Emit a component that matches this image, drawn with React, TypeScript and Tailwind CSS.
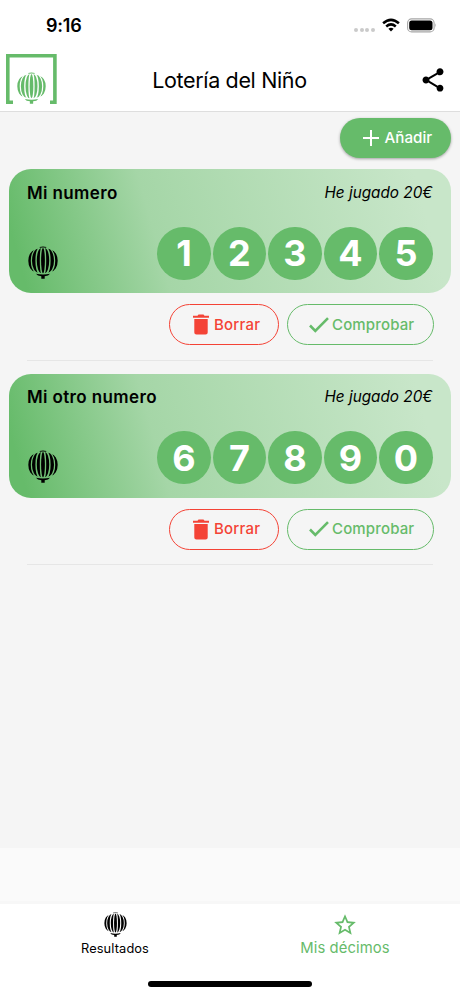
import React from "react";

function Balloon({ className }: { className?: string }) {
  return (
    <svg viewBox="0 0 30 33" className={className} fill="currentColor">
      <path d="M11.500 1.100Q15 -.1 18.500 1.100L18 1.800Q15 1 12 1.800Z" />
      <ellipse cx="15" cy="14.600" rx="1.900" ry="12.600" />
      <path d="M13 2.200A1.200 12.400 0 0 0 13 27A4.200 12.400 0 0 1 13 2.200Z" />
      <path d="M17 2.200A1.200 12.400 0 0 1 17 27A4.200 12.400 0 0 0 17 2.200Z" />
      <path d="M10.200 2.800A2.800 11.900 0 0 0 10.200 26.600A6.200 11.900 0 0 1 10.200 2.800Z" />
      <path d="M19.800 2.800A2.800 11.900 0 0 1 19.800 26.600A6.200 11.900 0 0 0 19.800 2.800Z" />
      <path d="M6.800 4.300A4 10.500 0 0 0 6.800 25.300A6.500 10.500 0 0 1 6.800 4.300Z" />
      <path d="M23.200 4.300A4 10.500 0 0 1 23.200 25.300A6.500 10.500 0 0 0 23.200 4.300Z" />
      <path d="M8 27.800Q15 29.400 22 27.800L20 29.600L16.700 30.300V32.800H13.300V30.300L10 29.600Z" />
    </svg>
  );
}

function StatusBar() {
  return (
    <div className="flex h-[50px] items-start justify-between pl-[46px] pr-[23px]">
      <span className="mt-[12px] text-[18px] leading-[27px] font-semibold tracking-[-0.2px]">9:16</span>
      <div className="mt-[17px] flex items-center">
        <div className="mr-[7px] mt-[9px] flex gap-[1.600px]">
          {[0, 1, 2, 3].map((i) => (
            <span key={i} className="size-[4px] rounded-full bg-[#cacaca]" />
          ))}
        </div>
        <svg className="mr-[7px] h-[14px] w-[18px]" viewBox="0 0 18 14" fill="none" stroke="black" strokeWidth="2.500">
          <path d="M1.100 5.300Q9-1.600 16.900 5.300" />
          <path d="M4.200 8.500Q9 4.300 13.800 8.500" />
          <path d="M6.400 10.800Q9 8.700 11.600 10.800L9 13.500Z" fill="black" stroke="none" />
        </svg>
        <svg className="mt-[1px] h-[15px] w-[30px]" viewBox="0 0 30 15">
          <rect x=".6" y=".9" width="26.500" height="13" rx="4" fill="none" stroke="#a6a6a6" strokeWidth="1.100" />
          <rect x="2.200" y="2.500" width="23.300" height="9.800" rx="2.500" />
          <path d="M28.400 5.300Q30 7.400 28.400 9.500Z" fill="#a6a6a6" />
        </svg>
      </div>
    </div>
  );
}

function Header() {
  return (
    <header className="flex h-[61px] items-start justify-between pl-[6px] pr-[13px]">
      <div className="mt-[4px] h-[50px] w-[51px] text-[#66bb6a]">
        <svg viewBox="0 0 51 50" className="h-full w-full">
          <path d="M7 48.200H1.800V1.800H48.900V48.200H44" fill="none" stroke="currentColor" strokeWidth="3.600" />
          <svg x="11" y="18" width="29" height="32" viewBox="0 0 29 32">
            <Balloon />
          </svg>
        </svg>
      </div>
      <h1 className="mt-[14px] ml-[6px] w-[170px] whitespace-nowrap text-center text-[21.500px] leading-[32px] tracking-[-0.350px]">Lotería del Niño</h1>
      <svg className="mt-[16px] ml-[23px] size-[28px]" viewBox="0 0 24 24">
        <path d="M18 16.080c-.76 0-1.440.3-1.960.77L8.910 12.700c.05-.23.090-.46.090-.7s-.04-.47-.09-.7l7.050-4.110c.54.5 1.250.81 2.040.81 1.660 0 3-1.340 3-3s-1.340-3-3-3-3 1.340-3 3c0 .24.040.47.090.7L8.040 9.810C7.500 9.310 6.790 9 6 9c-1.660 0-3 1.340-3 3s1.340 3 3 3c.79 0 1.500-.31 2.040-.81l7.120 4.160c-.05.21-.08.43-.08.65 0 1.610 1.310 2.920 2.920 2.920s2.920-1.310 2.920-2.920-1.310-2.920-2.920-2.920z" />
      </svg>
    </header>
  );
}

function Ticket({ name, digits }: { name: string; digits: string }) {
  return (
    <section className="h-[204.300px] px-[9px]">
      <div className="h-[124px] rounded-[22px] bg-[linear-gradient(74.300deg,#66bb6a_4%,#a5d6a7_34%,#c8e6c9_92%)] pr-[18.500px] pl-[18px] pt-[10px]">
        <div className="flex h-[28px] items-center justify-between">
          <span className="text-[17px] font-semibold tracking-[0.370px]">{name}</span>
          <span className="text-[15.300px] italic">He jugado 20€</span>
        </div>
        <div className="mt-[19.500px] flex items-start justify-between">
          <Balloon className="mt-[19px] ml-[1px] h-[33px] w-[30px]" />
          <div className="flex gap-[2.300px]">
            {digits.split("").map((d) => (
              <span key={d} className="flex size-[53.200px] items-center justify-center rounded-full bg-[#66bb6a] text-[36px] font-bold text-white">{d}</span>
            ))}
          </div>
        </div>
      </div>
      <div className="mx-[18px] flex h-[67.500px] items-start justify-end gap-[8px] border-b border-[#e6e6e6] pt-[11px]">
        <button className="flex h-[41px] w-[110px] items-center rounded-full border-[1.300px] border-[#f44336] pl-[23px] text-[15px] font-medium tracking-[0.200px] text-[#f44336]">
          <svg className="mr-[5px] h-[21px] w-[16px]" viewBox="0 0 16 21" fill="currentColor">
            <path d="M1.300 5H14.700V18.500Q14.700 20.600 12.600 20.600H3.400Q1.300 20.600 1.300 18.500ZM0 1.700H4.500L5.500.5H10.500L11.500 1.700H16V3.700H0Z" />
          </svg>
          Borrar
        </button>
        <button className="mr-[-1px] flex h-[41px] w-[147px] items-center rounded-full border-[1.300px] border-[#66bb6a] pl-[21px] text-[15px] font-medium tracking-[0.150px] text-[#66bb6a]">
          <svg className="mr-[3px] h-[16px] w-[20px]" viewBox="0 0 20 16" fill="none" stroke="currentColor" strokeWidth="2.600">
            <path d="M1 8.500L6.300 13.800L19 1.100" />
          </svg>
          Comprobar
        </button>
      </div>
    </section>
  );
}

export default function App() {
  return (
    <div className="flex h-[996px] w-[460px] flex-col overflow-hidden bg-white font-['Inter','Liberation_Sans',sans-serif] text-black">
      <StatusBar />
      <Header />
      <main className="h-[737px] border-t border-[#dedede] bg-[#f5f5f5]">
        <div className="flex h-[57.300px] justify-end pt-[6px] pr-[9px]">
          <button className="flex h-[40px] w-[111px] items-center rounded-full bg-[#66bb6a] pl-[23px] text-[15.200px] font-medium tracking-[0px] text-white shadow-[0_1px_3px_rgba(0,0,0,0.350)]">
            <svg className="mr-[5.500px] size-[16px]" viewBox="0 0 16 16" stroke="currentColor" strokeWidth="2">
              <path d="M8 0V16M0 8H16" />
            </svg>
            Añadir
          </button>
        </div>
        <Ticket name="Mi numero" digits="12345" />
        <Ticket name="Mi otro numero" digits="67890" />
      </main>
      <div className="h-[56px] border-b-[3px] border-[#f7f7f7] bg-[#fafafa]" />
      <nav className="grid h-[77px] grid-cols-2 bg-white">
        <div className="flex flex-col items-center pt-[8px]">
          <Balloon className="h-[25px] w-[23px]" />
          <span className="mt-[2px] text-[12.800px] leading-[20px] tracking-[0.120px]">Resultados</span>
        </div>
        <div className="flex flex-col items-center pt-[8px] text-[#66bb6a]">
          <svg className="size-[26px]" viewBox="0 0 24 24" fill="currentColor">
            <path d="M22 9.240l-7.190-.62L12 2 9.190 8.630 2 9.240l5.460 4.730L5.820 21 12 17.270 18.180 21l-1.630-7.030L22 9.240zM12 15.400l-3.760 2.270 1-4.280-3.320-2.880 4.380-.38L12 6.100l1.710 4.040 4.380.38-3.320 2.880 1 4.280L12 15.400z" />
          </svg>
          <span className="text-[14.800px] leading-[20px] tracking-[0.120px]">Mis décimos</span>
        </div>
      </nav>
      <div className="mx-auto h-[5.500px] w-[164px] shrink-0 rounded-full bg-black" />
    </div>
  );
}
